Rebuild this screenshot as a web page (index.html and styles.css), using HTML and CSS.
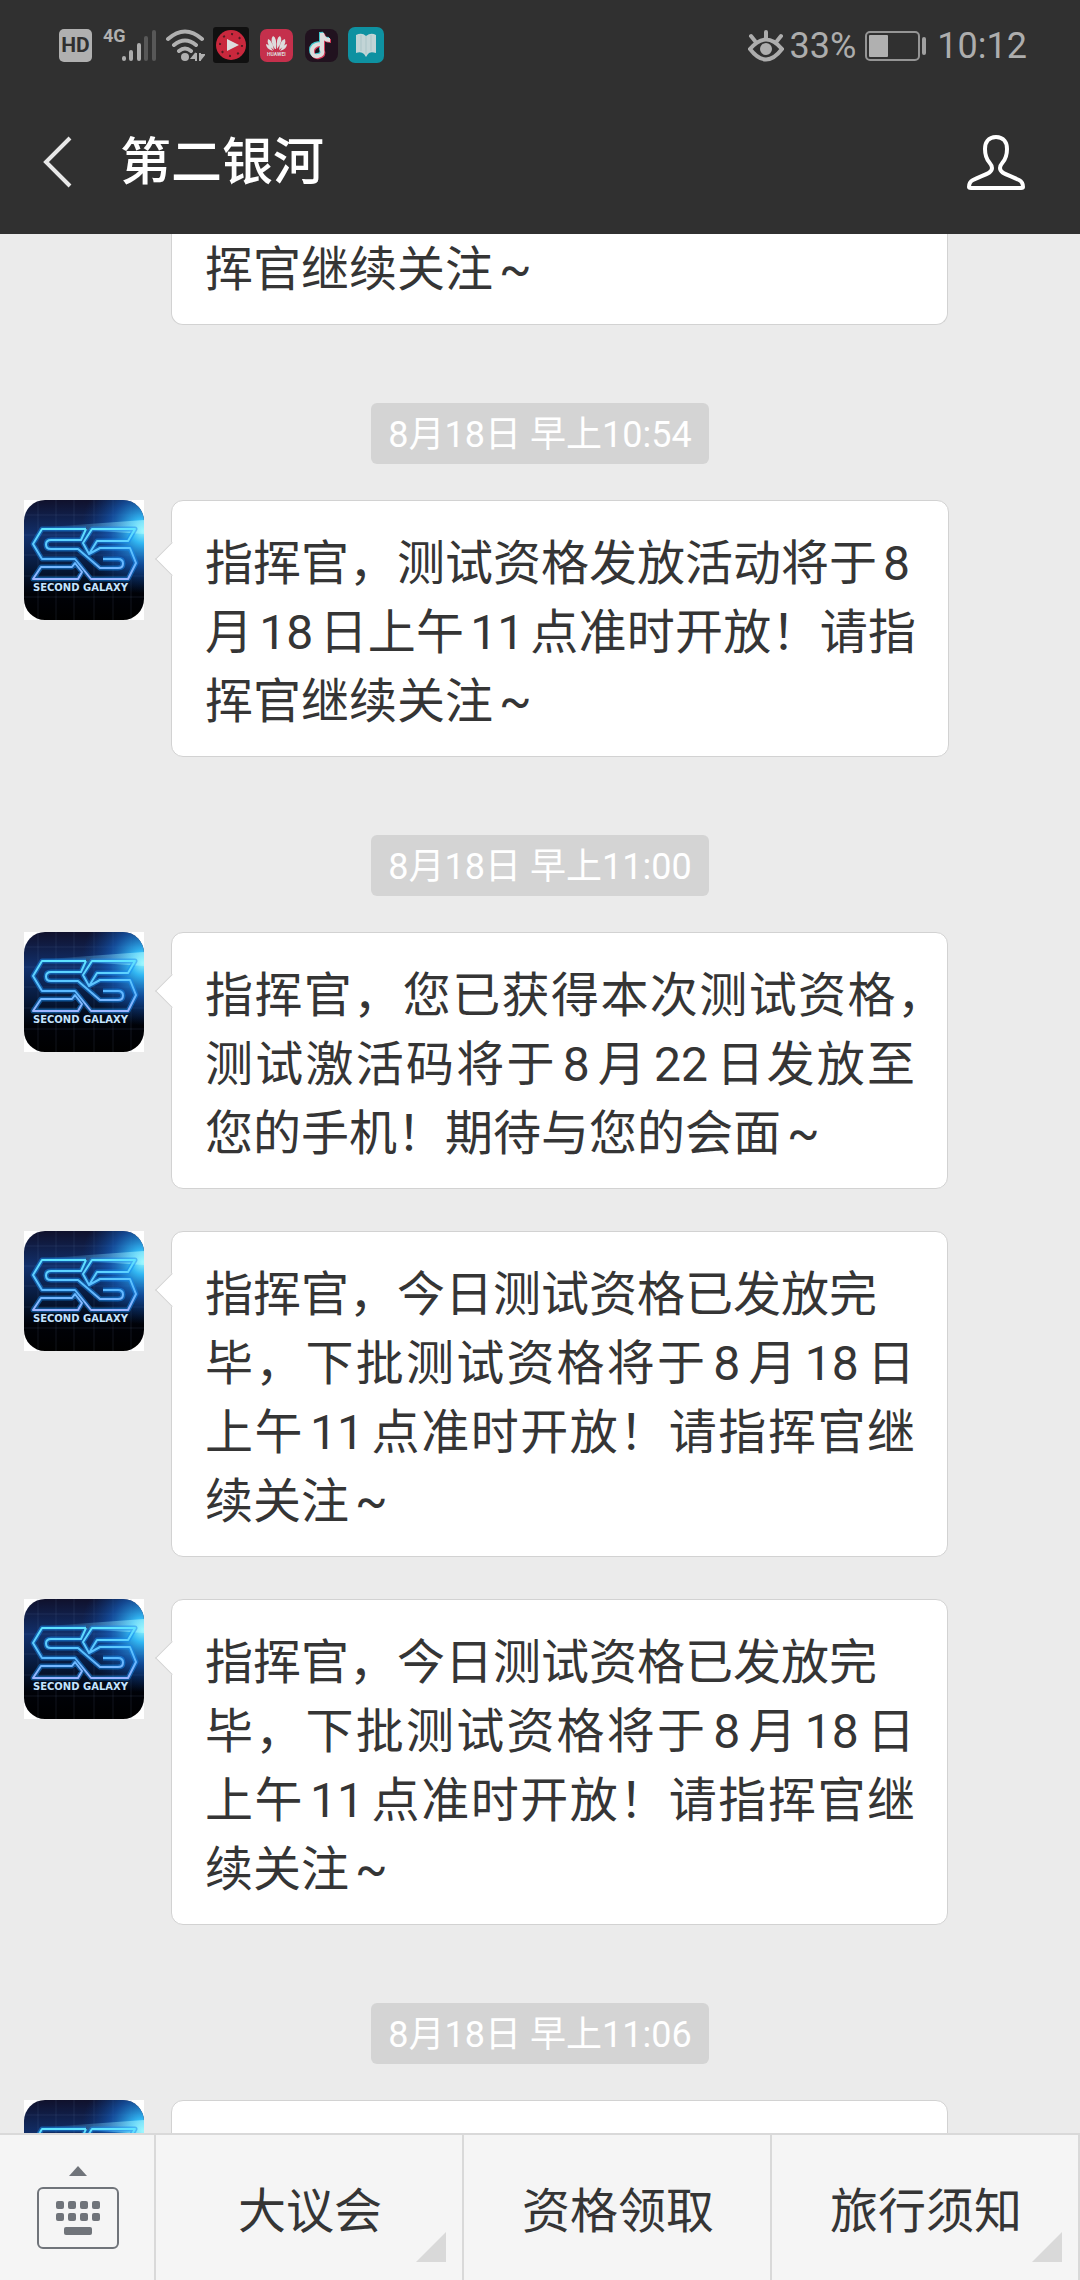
FILE: index.html
```html
<!DOCTYPE html>
<html lang="zh-CN">
<head>
<meta charset="UTF-8" />
<meta name="viewport" content="width=device-width, initial-scale=1" />
<title>第二银河</title>
<link rel="stylesheet" href="styles.css">
</head>
<body>
  <!-- shared drawing for every avatar -->
  <svg class="defs" aria-hidden="true">
    <defs>
      <linearGradient id="sky" x1="0" y1="0" x2="0" y2="1">
        <stop offset="0" stop-color="#10112c"/>
        <stop offset=".3" stop-color="#11306c"/>
        <stop offset=".55" stop-color="#071a3c"/>
        <stop offset=".78" stop-color="#000208"/>
        <stop offset="1" stop-color="#000"/>
      </linearGradient>
      <radialGradient id="flare" gradientUnits="userSpaceOnUse" cx="119" cy="31" r="62">
        <stop offset="0" stop-color="#8ff4ff"/>
        <stop offset=".2" stop-color="#31b6f2"/>
        <stop offset=".55" stop-color="#1561c0" stop-opacity=".65"/>
        <stop offset="1" stop-color="#0a3a8a" stop-opacity="0"/>
      </radialGradient>
      <linearGradient id="streak" x1="0" y1="0" x2="1" y2="0">
        <stop offset="0" stop-color="#2a8ae0" stop-opacity="0"/>
        <stop offset="1" stop-color="#a8fbff"/>
      </linearGradient>
      <linearGradient id="neon" gradientUnits="userSpaceOnUse" x1="0" y1="28" x2="0" y2="80">
        <stop offset="0" stop-color="#5fe4ff"/>
        <stop offset=".6" stop-color="#5ab8ff"/>
        <stop offset="1" stop-color="#9fb4ff"/>
      </linearGradient>
      <path id="sg" d="M62 29H18L9 44L18 59H51L67 79H104L112 63L106 48H76L65 54L59 43L68 29H111L104 41H73L65 54M62 29L57 40H27Q22 40 22 44.500T27 49H54L76 68H94Q99 68 99 63.500T94 59H79M9 79L17 67H48L51 63L58 72L54 79Z"/>
      <symbol id="avatar" viewBox="0 0 120 120">
        <rect width="120" height="120" fill="#fff"/>
        <rect width="120" height="120" rx="21" fill="url(#sky)"/>
        <path d="M14 0v120M32 0v120M50 0v120M70 0v120M89 0v120M107 0v120M0 15h120M0 35h120M0 55h120M0 76h120M0 97h120" stroke="#6f8fb5" stroke-opacity=".14" fill="none"/>
        <rect width="120" height="120" rx="21" fill="url(#flare)"/>
        <path d="M10 28L120 20V34L60 30Z" fill="url(#streak)" opacity=".6"/>
        <g fill="none" stroke-linejoin="round">
          <use href="#sg" stroke="#168bf0" stroke-width="5" stroke-opacity=".5"/>
          <use href="#sg" stroke="url(#neon)" stroke-width="2"/>
        </g>
        <text x="9" y="91" class="avatar-name">SECOND GALAXY</text>
      </symbol>
    </defs>
  </svg>

  <div class="app">
    <header>
      <div class="status">
        <div class="status-left">
          <span class="hd">HD</span>
          <svg class="signal" viewBox="0 0 54 36" aria-label="4G">
            <text x="0" y="15">4G</text>
            <g stroke-width="4" stroke-linecap="round">
              <path d="M21 31v1M28 25v7M36 18v14" stroke="#adadad"/>
              <path d="M43 11v21M51 5v27" stroke="#585858"/>
            </g>
          </svg>
          <svg class="wifi" viewBox="0 0 40 36" aria-hidden="true">
            <g fill="none" stroke="#b0b0b0" stroke-width="4" stroke-linecap="round">
              <path d="M3 12Q20 -3 37 12M9 18Q20 9 31 18M14 24Q20 19 26 24"/>
            </g>
            <circle cx="20" cy="30" r="4" fill="#b0b0b0"/>
            <path d="M31 26v8M31 26l-4 5h4M35 34v-8M35 33l4-5h-4" stroke="#b0b0b0" stroke-width="2" fill="#b0b0b0"/>
          </svg>
          <svg class="tray" viewBox="0 0 36 36" aria-hidden="true">
            <rect width="36" height="36" rx="3" fill="#101010"/>
            <circle cx="18" cy="18" r="15" fill="#c9283d"/>
            <circle cx="18" cy="18" r="11" fill="none" stroke="#551a22" stroke-width="2" stroke-dasharray="2 6.600"/>
            <path d="M14 12v12l12-6z" fill="#ddd"/>
          </svg>
          <svg class="tray" viewBox="0 0 36 36" aria-hidden="true">
            <rect x="2" y="2" width="33" height="33" rx="7" fill="#c5304c"/>
            <g fill="#ddd">
              <path d="M17 22Q11 13 15 9Q19 10 18 22ZM19 22Q18 10 22 9Q26 13 19 22ZM16 23Q8 18 10 12Q14 13 16 23ZM21 23Q22 13 27 12Q29 18 21 23ZM15 24Q8 22 8 17Q12 18 15 24ZM22 24Q25 18 29 17Q29 22 22 24Z"/>
              <text x="9" y="29" class="tiny">HUAWEI</text>
            </g>
          </svg>
          <svg class="tray" viewBox="0 0 36 36" aria-hidden="true">
            <rect x="2" y="2" width="33" height="33" rx="8" fill="#21121f"/>
            <g fill="none" stroke-width="4">
              <path d="M16 16Q8 17 8 23T14 28T18 22V5Q19 12 26 12" stroke="#42c9cf"/>
              <path d="M18 18Q10 19 10 25T16 30T20 24V7Q21 14 28 14" stroke="#d53b59"/>
              <path d="M17 17Q9 18 9 24T15 29T19 23V6Q20 13 27 13" stroke="#ddd"/>
            </g>
          </svg>
          <svg class="tray" viewBox="0 0 36 36" aria-hidden="true">
            <rect width="36" height="36" rx="7" fill="#0e91a1"/>
            <path d="M8 8Q14 5 18 9Q23 5 28 8V26Q22 24 20 27L18 30L16 27Q13 24 8 26Z" fill="#c2d4d6"/>
            <path d="M18 9v18M13 8v16M23 8v16" stroke="#aac4c7"/>
          </svg>
        </div>
        <div class="status-right">
          <svg class="eye" viewBox="0 0 36 34" aria-hidden="true">
            <g fill="none" stroke="#adadad" stroke-width="4" stroke-linecap="round">
              <path d="M2 20Q18 1 34 20Q18 41 2 20ZM18 10V3M7 12L3 7M29 12L33 7"/>
            </g>
            <circle cx="18" cy="20" r="6" fill="#adadad"/>
          </svg>
          <span>33%</span>
          <svg class="battery" viewBox="0 0 62 30" aria-hidden="true">
            <rect x="1" y="1" width="53" height="28" rx="4" fill="none" stroke="#959595" stroke-width="2"/>
            <rect x="4" y="4" width="19" height="22" rx="1" fill="#b0b0b0"/>
            <rect x="57" y="6" width="4" height="18" rx="2" fill="#a0a0a0"/>
          </svg>
          <span>10:12</span>
        </div>
      </div>
      <div class="navbar">
        <button class="back" aria-label="返回">
          <svg viewBox="0 0 30 52"><path d="M27 2L3 26L27 50" fill="none" stroke="#e8e8e8" stroke-width="4"/></svg>
        </button>
        <h1>第二银河</h1>
        <button class="profile" aria-label="公众号资料">
          <svg viewBox="0 0 58 56"><path d="M29 3C21 3 18 9 18 15C18 29 25 28 25 34C25 39 19 40 6 46Q2 48 2 53Q2 54 4 54H54Q56 54 56 53Q56 48 52 46C39 40 33 39 33 34C33 28 40 29 40 15C40 9 37 3 29 3Z" fill="none" stroke="#fff" stroke-width="4"/></svg>
        </button>
      </div>
    </header>

    <main class="chat">
      <div class="msg">
        <p class="bubble first">挥官继续关注<b>~</b></p>
      </div>

      <time>8月18日 早上10:54</time>
      <div class="msg">
        <svg class="avatar" role="img" aria-label="Second Galaxy"><use href="#avatar"/></svg>
        <p class="bubble">
          <span>指挥官，测试资格发放活动将于<b>8</b></span>
          <span class="full">月<b>18</b>日上午<b>11</b>点准时开放！请指</span>
          <span>挥官继续关注<b>~</b></span>
        </p>
      </div>

      <time>8月18日 早上11:00</time>
      <div class="msg">
        <svg class="avatar" role="img" aria-label="Second Galaxy"><use href="#avatar"/></svg>
        <p class="bubble">
          <span class="full">指挥官，您已获得本次测试资格<i>，</i></span>
          <span class="full">测试激活码将于<b>8</b>月<b>22</b>日发放至</span>
          <span>您的手机！期待与您的会面<b>~</b></span>
        </p>
      </div>
      <div class="msg">
        <svg class="avatar" role="img" aria-label="Second Galaxy"><use href="#avatar"/></svg>
        <p class="bubble">
          <span>指挥官，今日测试资格已发放完</span>
          <span class="full">毕，下批测试资格将于<b>8</b>月<b>18</b>日</span>
          <span class="full">上午<b>11</b>点准时开放！请指挥官继</span>
          <span>续关注<b>~</b></span>
        </p>
      </div>
      <div class="msg">
        <svg class="avatar" role="img" aria-label="Second Galaxy"><use href="#avatar"/></svg>
        <p class="bubble">
          <span>指挥官，今日测试资格已发放完</span>
          <span class="full">毕，下批测试资格将于<b>8</b>月<b>18</b>日</span>
          <span class="full">上午<b>11</b>点准时开放！请指挥官继</span>
          <span>续关注<b>~</b></span>
        </p>
      </div>

      <time>8月18日 早上11:06</time>
      <div class="msg">
        <svg class="avatar" role="img" aria-label="Second Galaxy"><use href="#avatar"/></svg>
        <p class="bubble empty"></p>
      </div>
    </main>

    <nav class="menu">
      <button class="keyboard" aria-label="切换键盘">
        <svg viewBox="0 0 82 84">
          <path d="M32 10L41 0L50 10Z" fill="#70747a"/>
          <rect x="1" y="22" width="80" height="60" rx="5" fill="none" stroke="#70747a" stroke-width="2"/>
          <g fill="#70747a">
            <rect x="19" y="35" width="8" height="8" rx="2"/><rect x="31" y="35" width="8" height="8" rx="2"/><rect x="43" y="35" width="8" height="8" rx="2"/><rect x="55" y="35" width="8" height="8" rx="2"/>
            <rect x="19" y="47" width="8" height="8" rx="2"/><rect x="31" y="47" width="8" height="8" rx="2"/><rect x="43" y="47" width="8" height="8" rx="2"/><rect x="55" y="47" width="8" height="8" rx="2"/>
            <rect x="27" y="61" width="28" height="8" rx="2"/>
          </g>
        </svg>
      </button>
      <button class="more">大议会</button>
      <button>资格领取</button>
      <button class="more">旅行须知</button>
    </nav>
  </div>
</body>
</html>
```
FILE: styles.css
```css
* {
  box-sizing: border-box;
}
body {
  margin: 0;
  background: #ebebeb;
  color: #353535;
  font-family: Roboto, "Noto Sans CJK SC", sans-serif;
}
button {
  border: none;
  background: none;
  padding: 0;
  font: inherit;
  color: inherit;
}
.defs {
  position: absolute;
  width: 0;
  height: 0;
}
.app {
  height: 100vh;
  display: flex;
  flex-direction: column;
  overflow: hidden;
}

/* Header */
header {
  background: #303030;
  color: #fff;
}
.status {
  display: flex;
  justify-content: space-between;
  align-items: center;
  height: 90px;
  padding: 0 53px 0 59px;
  color: #adadad;
  font-size: 36px;
}
.status-left, .status-right {
  display: flex;
  align-items: center;
}
.status-right {
  gap: 6px;
  padding-top: 2px;
}
.hd {
  width: 33px;
  height: 33px;
  margin-right: 11px;
  border-radius: 5px;
  background: #b0b0b0;
  color: #303030;
  font-size: 21px;
  font-weight: 700;
  line-height: 33px;
  text-align: center;
}
.signal {
  width: 54px;
  height: 36px;
  margin-right: 8px;
}
.signal text {
  font-size: 18px;
  font-weight: 700;
  fill: #b0b0b0;
}
.wifi {
  width: 40px;
  height: 36px;
  margin-right: 8px;
}
.tray {
  width: 36px;
  height: 36px;
  margin-right: 9px;
}
.tiny {
  font-size: 5px;
  font-weight: 700;
}
.eye {
  width: 36px;
  height: 34px;
}
.battery {
  width: 62px;
  height: 30px;
  margin: 0 4px 0 3px;
}
.navbar {
  display: flex;
  align-items: center;
  height: 144px;
  padding: 0 55px 0 43px;
}
.back svg {
  display: block;
  width: 30px;
  height: 52px;
}
.navbar h1 {
  flex: 1;
  margin: 0 0 0 47px;
  padding-top: 2px;
  font-size: 51px;
  font-weight: 500;
  line-height: 72px;
}
.profile svg {
  display: block;
  width: 58px;
  height: 56px;
}

/* Chat */
.chat {
  flex: 1;
  min-height: 0;
  overflow: hidden;
  display: flex;
  flex-direction: column;
}
.msg {
  flex: none;
  display: flex;
  align-items: flex-start;
  margin: 0 132px 42px 24px;
}
.avatar {
  flex: none;
  width: 120px;
  height: 120px;
}
.avatar-name {
  font-family: "DejaVu Sans", sans-serif;
  font-size: 10px;
  font-weight: 700;
  fill: #c4e4ff;
}
.bubble {
  position: relative;
  flex: 1;
  margin: 0 0 0 27px;
  padding: 28px 32px 20px 33px;
  background: #fff;
  border: 1px solid #d2d2d2;
  border-radius: 12px;
  font-size: 48px;
  line-height: 69px;
  white-space: nowrap;
}
.bubble span {
  display: block;
}
.bubble .full {
  text-align: justify;
  text-align-last: justify;
}
/* numbers and signs keep a little air from the characters beside them */
.bubble b {
  margin: 0 6px;
  font-weight: 400;
}
/* comma that hangs over the end of a full line */
.bubble i {
  margin-right: -30px;
  font-style: normal;
}
.bubble::before {
  content: "";
  position: absolute;
  left: -12px;
  top: 46px;
  width: 23px;
  height: 23px;
  background: #fff;
  border: solid #d2d2d2;
  border-width: 0 0 1px 1px;
  transform: rotate(45deg);
}
.bubble.first {
  margin-left: 147px;
  padding-top: 1px;
  border-top: none;
  border-radius: 0 0 12px 12px;
}
.bubble.first::before {
  display: none;
}
.bubble.empty {
  height: 256px;
}
time {
  flex: none;
  align-self: center;
  margin: 36px 0;
  padding: 4px 17px 0;
  border-radius: 6px;
  background: #d4d4d4;
  color: #fff;
  font-size: 36px;
  line-height: 57px;
}

/* Bottom menu */
.menu {
  display: flex;
  height: 147px;
  border-top: 2px solid #d9d9d9;
  background: #f5f5f5;
  font-size: 48px;
}
.menu button {
  position: relative;
  flex: 1;
  padding: 0 0 2px 2px;
  border-right: 2px solid #d9d9d9;
}
.menu .keyboard {
  flex: none;
  width: 156px;
  padding-bottom: 0;
}
.keyboard svg {
  display: block;
  width: 82px;
  height: 84px;
  margin: 0 auto;
}
.more::after {
  content: "";
  position: absolute;
  right: 16px;
  bottom: 18px;
  width: 30px;
  height: 30px;
  background: #d9d9d9;
  clip-path: polygon(100% 0, 100% 100%, 0 100%);
}
```
